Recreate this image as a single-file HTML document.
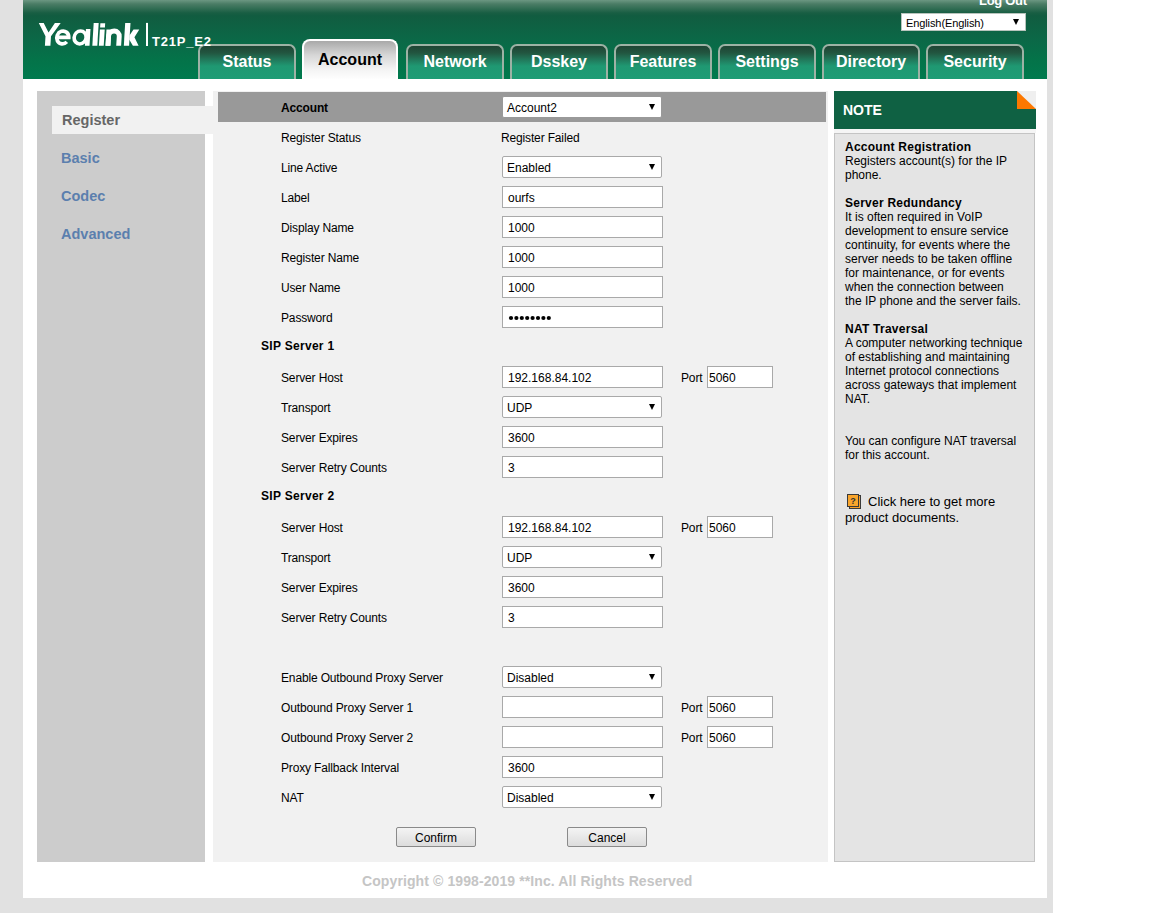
<!DOCTYPE html>
<html><head><meta charset="utf-8">
<style>
html,body{margin:0;padding:0;}
body{width:1152px;height:913px;position:relative;overflow:hidden;background:#fff;font-family:"Liberation Sans",sans-serif;}
#bg{position:absolute;left:0;top:0;width:1053px;height:913px;background:#e1e1e1;}
#wrap{position:absolute;left:23px;top:0;width:1024px;height:898px;background:#fff;}
#hdr{position:absolute;left:23px;top:0;width:1024px;height:79px;
 background:linear-gradient(to bottom,#6c9782 0px,#4a7c65 4px,#2f6c52 9px,#185e43 13px,#115c40 16px,#0b6847 40px,#047349 60px,#007a4e 79px);}
#model{position:absolute;z-index:5;left:152px;top:34px;color:#fff;font-size:13px;font-weight:bold;letter-spacing:0.8px;}
#logout{position:absolute;left:979px;top:-7px;color:#fff;font-size:13px;font-weight:bold;letter-spacing:-0.3px;}
#lang{position:absolute;left:901px;top:13px;width:125px;height:18px;background:#fff;box-sizing:border-box;border:1px solid #b8c4bd;}
#lang span{position:absolute;left:4px;top:3px;letter-spacing:-0.1px;font-size:11px;color:#000;}
#lang i{position:absolute;left:111px;top:5px;width:0;height:0;border-left:3px solid transparent;border-right:3px solid transparent;border-top:6px solid #000;}
.tab{position:absolute;top:44px;width:98px;height:35px;box-sizing:border-box;border:2px solid #9db2a5;border-bottom:none;border-radius:7px 7px 0 0;
 background:linear-gradient(to bottom,#1e4434 0px,#225640 7px,#217a5c 14px,#1f9872 20px,#1e9c75 33px);color:#fff;font-weight:bold;font-size:16px;text-align:center;line-height:32px;}
.tab.act{top:39px;width:96px;height:40px;border-color:#fff;border-radius:8px 8px 0 0;background:linear-gradient(to bottom,#a9a9a9 0px,#d6d6d6 14px,#f3f3f3 28px,#fff 39px);color:#000;line-height:38px;}
#side{position:absolute;left:37px;top:91px;width:168px;height:771px;background:#cccccc;}
.nav{position:absolute;left:62px;font-size:14.5px;font-weight:bold;color:#5b7fae;}
#reg{position:absolute;left:52px;top:106px;width:161px;height:28px;background:#f1f1f1;}
#content{position:absolute;left:213px;top:91px;width:615px;height:771px;background:#f1f1f1;}
#gbar{position:absolute;left:218px;top:92px;width:608px;height:30px;background:#999999;}
.t{position:absolute;font-size:12px;line-height:14px;color:#000;white-space:nowrap;letter-spacing:-0.15px;}
.b{font-weight:bold;}
.sel,.inp{position:absolute;left:502px;width:161px;height:22px;box-sizing:border-box;border:1px solid #a9a9a9;background:#fff;}
.sel{border-radius:2px;width:160px;}
.sel span,.inp span{position:absolute;left:4px;top:4px;font-size:12px;line-height:14px;color:#000;white-space:nowrap;}
.inp span{left:5px;}
.sel i{position:absolute;left:146px;top:7px;width:0;height:0;border-left:3px solid transparent;border-right:3px solid transparent;border-top:6px solid #000;}
.inp.port{left:707px;width:66px;}
.inp.port span{left:1px;}
.btn{position:absolute;top:827px;width:80px;height:20px;box-sizing:border-box;border:1px solid #8a8a8a;border-radius:2px;background:linear-gradient(#f4f4f4,#dcdcdc);font-size:12px;text-align:center;line-height:20px;color:#000;}
#nhead{position:absolute;left:834px;top:91px;width:202px;height:38px;background:#0f6143;}
#nhead span{position:absolute;left:9px;top:11px;color:#fff;font-weight:bold;font-size:14px;}
#fold{position:absolute;left:1017px;top:91px;width:0;height:0;border-top:18px solid #efefef;border-left:19px solid #fc7800;}
#nbody{position:absolute;left:834px;top:133px;width:201px;height:729px;box-sizing:border-box;border:1px solid #c4c4c4;background:#e4e4e4;}
.nt{position:absolute;left:845px;font-size:12px;line-height:14px;color:#000;white-space:nowrap;}
.nb{font-weight:bold;letter-spacing:0.25px;}
#copy{position:absolute;left:362px;top:873px;font-size:14px;font-weight:bold;color:#c5c5c5;letter-spacing:0.1px;white-space:nowrap;}
</style></head><body>
<div id="bg"></div>
<div id="wrap"></div>
<div id="hdr"></div>
<svg id="logo" width="160" height="60" viewBox="0 0 160 60" style="position:absolute;left:0;top:0">
<g transform="translate(0,34.5) skewX(-3.5) translate(0,-34.5)">
<g fill="#fff">
<path d="M38.1,23.1 L43,23.1 L48.4,32.4 L54.2,23.1 L60,23.1 L51.1,36.2 L51.1,45.8 L45.6,45.8 L45.6,36.2 Z"/>
<rect x="93" y="23.1" width="5" height="22.7"/>
<rect x="99.7" y="23.3" width="4.8" height="4.3"/>
<rect x="99.6" y="29.6" width="4.8" height="16.2"/>
<rect x="106.2" y="29.6" width="4.9" height="16.2"/>
<rect x="124.5" y="23.1" width="5.3" height="22.7"/>
<path d="M129.5,35.6 L133.2,29.6 L139,29.6 L134.6,37.3 L139.3,45.8 L133.6,45.8 L129.5,39.4 Z"/>
<rect x="85.6" y="29.1" width="4.6" height="16.7"/>
</g>
<g fill="none" stroke="#fff">
<path d="M56.5,37.3 H68.9 A6,6.45 0 1 0 67.3,41.9" stroke-width="3.7"/>
<ellipse cx="80.3" cy="37.45" rx="6" ry="6.5" stroke-width="3.6"/>
<path d="M108.65,45.8 V36.4 A5.35,5.35 0 0 1 119.35,36.4 V45.8" stroke-width="4.9"/>
</g>
</g>
<rect x="146" y="22.9" width="2" height="23.1" fill="#fff"/>
</svg>
<div id="model">T21P_E2</div>
<div id="logout">Log Out</div>
<div id="lang"><span>English(English)</span><i></i></div>
<div class="tab" style="left:198px">Status</div>
<div class="tab act" style="left:302px">Account</div>
<div class="tab" style="left:406px">Network</div>
<div class="tab" style="left:510px">Dsskey</div>
<div class="tab" style="left:614px">Features</div>
<div class="tab" style="left:718px">Settings</div>
<div class="tab" style="left:822px">Directory</div>
<div class="tab" style="left:926px">Security</div>
<div id="side"></div>
<div id="reg"></div>
<div class="nav" style="top:112px;left:62px;color:#666">Register</div>
<div class="nav" style="top:150px;left:61px">Basic</div>
<div class="nav" style="top:188px;left:61px">Codec</div>
<div class="nav" style="top:226px;left:61px">Advanced</div>
<div id="content"></div>
<div id="gbar"></div>
<div class="t b" style="left:281px;top:101px">Account</div>
<div class="sel" style="top:96px;border-color:#999"><span>Account2</span><i></i></div>
<div class="t" style="left:281px;top:131px">Register Status</div>
<div class="t" style="left:501px;top:131px">Register Failed</div>
<div class="t" style="left:281px;top:161px">Line Active</div>
<div class="sel" style="top:156px"><span>Enabled</span><i></i></div>
<div class="t" style="left:281px;top:191px">Label</div>
<div class="inp" style="top:186px"><span>ourfs</span></div>
<div class="t" style="left:281px;top:221px">Display Name</div>
<div class="inp" style="top:216px"><span>1000</span></div>
<div class="t" style="left:281px;top:251px">Register Name</div>
<div class="inp" style="top:246px"><span>1000</span></div>
<div class="t" style="left:281px;top:281px">User Name</div>
<div class="inp" style="top:276px"><span>1000</span></div>
<div class="t" style="left:281px;top:311px">Password</div>
<div class="inp" style="top:306px"><svg width="60" height="20" style="position:absolute;left:0;top:0" fill="#000"><circle cx="8.0" cy="11" r="2.1"/><circle cx="13.4" cy="11" r="2.1"/><circle cx="18.8" cy="11" r="2.1"/><circle cx="24.2" cy="11" r="2.1"/><circle cx="29.6" cy="11" r="2.1"/><circle cx="35.0" cy="11" r="2.1"/><circle cx="40.4" cy="11" r="2.1"/><circle cx="45.8" cy="11" r="2.1"/></svg></div>
<div class="t b" style="left:261px;top:339px;letter-spacing:0.3px">SIP Server 1</div>
<div class="t" style="left:281px;top:371px">Server Host</div>
<div class="inp" style="top:366px"><span>192.168.84.102</span></div>
<div class="t" style="left:681px;top:371px">Port</div>
<div class="inp port" style="top:366px"><span>5060</span></div>
<div class="t" style="left:281px;top:401px">Transport</div>
<div class="sel" style="top:396px"><span>UDP</span><i></i></div>
<div class="t" style="left:281px;top:431px">Server Expires</div>
<div class="inp" style="top:426px"><span>3600</span></div>
<div class="t" style="left:281px;top:461px">Server Retry Counts</div>
<div class="inp" style="top:456px"><span>3</span></div>
<div class="t b" style="left:261px;top:489px;letter-spacing:0.3px">SIP Server 2</div>
<div class="t" style="left:281px;top:521px">Server Host</div>
<div class="inp" style="top:516px"><span>192.168.84.102</span></div>
<div class="t" style="left:681px;top:521px">Port</div>
<div class="inp port" style="top:516px"><span>5060</span></div>
<div class="t" style="left:281px;top:551px">Transport</div>
<div class="sel" style="top:546px"><span>UDP</span><i></i></div>
<div class="t" style="left:281px;top:581px">Server Expires</div>
<div class="inp" style="top:576px"><span>3600</span></div>
<div class="t" style="left:281px;top:611px">Server Retry Counts</div>
<div class="inp" style="top:606px"><span>3</span></div>
<div class="t" style="left:281px;top:671px">Enable Outbound Proxy Server</div>
<div class="sel" style="top:666px"><span>Disabled</span><i></i></div>
<div class="t" style="left:281px;top:701px">Outbound Proxy Server 1</div>
<div class="inp" style="top:696px"><span></span></div>
<div class="t" style="left:681px;top:701px">Port</div>
<div class="inp port" style="top:696px"><span>5060</span></div>
<div class="t" style="left:281px;top:731px">Outbound Proxy Server 2</div>
<div class="inp" style="top:726px"><span></span></div>
<div class="t" style="left:681px;top:731px">Port</div>
<div class="inp port" style="top:726px"><span>5060</span></div>
<div class="t" style="left:281px;top:761px">Proxy Fallback Interval</div>
<div class="inp" style="top:756px"><span>3600</span></div>
<div class="t" style="left:281px;top:791px">NAT</div>
<div class="sel" style="top:786px"><span>Disabled</span><i></i></div>
<div class="btn" style="left:396px">Confirm</div>
<div class="btn" style="left:567px">Cancel</div>
<div id="nhead"><span>NOTE</span></div>
<div id="fold"></div>
<div style="position:absolute;left:834px;top:129px;width:202px;height:4px;background:#f5f5f5"></div>
<div id="nbody"></div>
<div class="nt nb" style="top:140px">Account Registration</div>
<div class="nt" style="top:154px">Registers account(s) for the IP</div>
<div class="nt" style="top:168px">phone.</div>
<div class="nt nb" style="top:196px">Server Redundancy</div>
<div class="nt" style="top:210px">It is often required in VoIP</div>
<div class="nt" style="top:224px">development to ensure service</div>
<div class="nt" style="top:238px">continuity, for events where the</div>
<div class="nt" style="top:252px">server needs to be taken offline</div>
<div class="nt" style="top:266px">for maintenance, or for events</div>
<div class="nt" style="top:280px">when the connection between</div>
<div class="nt" style="top:294px">the IP phone and the server fails.</div>
<div class="nt nb" style="top:322px">NAT Traversal</div>
<div class="nt" style="top:336px">A computer networking technique</div>
<div class="nt" style="top:350px">of establishing and maintaining</div>
<div class="nt" style="top:364px">Internet protocol connections</div>
<div class="nt" style="top:378px">across gateways that implement</div>
<div class="nt" style="top:392px">NAT.</div>
<div class="nt" style="top:434px">You can configure NAT traversal</div>
<div class="nt" style="top:448px">for this account.</div>
<div class="nt" style="top:495px;left:868px;font-size:13px">Click here to get more</div>
<div class="nt" style="top:511px;left:845px;font-size:13px">product documents.</div>
<svg width="16" height="17" style="position:absolute;left:846px;top:493px"><rect x="3.5" y="2.5" width="11" height="13" fill="#f7a02a" stroke="#3a3a3a"/><rect x="1.5" y="1.5" width="11" height="12" fill="#f9a52c" stroke="#3a3a3a"/><text x="7" y="11" font-family="Liberation Sans" font-size="9" font-weight="bold" fill="#333" text-anchor="middle">?</text></svg>
<div id="copy">Copyright &copy; 1998-2019 **Inc. All Rights Reserved</div>
</body></html>
